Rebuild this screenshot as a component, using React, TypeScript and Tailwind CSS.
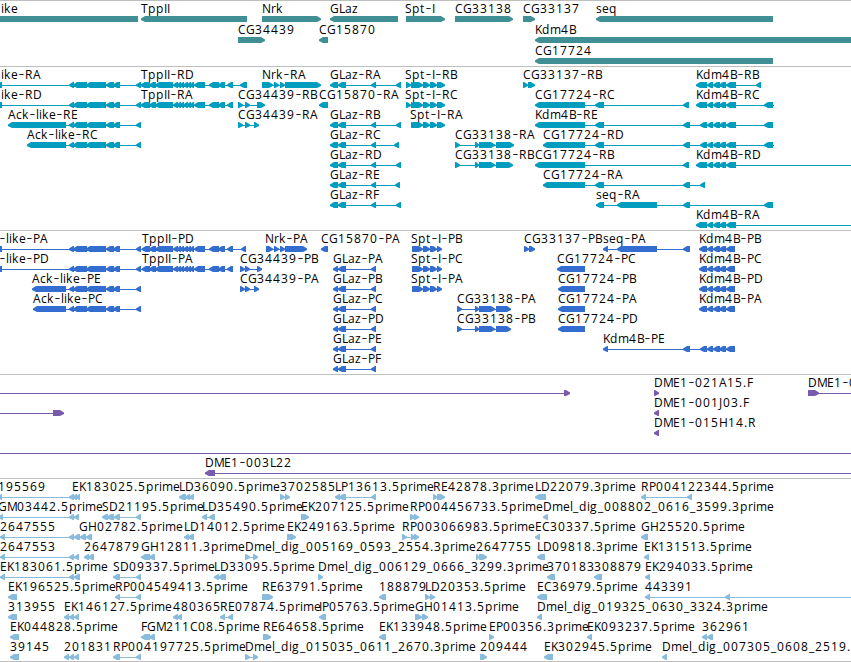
type Dir = "<" | ">";

// row, label, direction, exon blocks as "start:end", optional overrides
type Feature = [number, string, Dir, string, { x?: number; from?: number; to?: number }?];

type Track = {
  name: string;
  color: string;
  pitch?: number;
  className: string;
  features: Feature[];
};

const ACK = "69:74 73:87 86:106 106:114 113:120 136:141";
const TPP = "149:156 155:173 173:178 177:181 180:184 183:188 187:191 190:194 194:205 209:219 218:225 227:233";
const KDM = "707:713 713:720 719:726";

const genes: Feature[] = [
  [0, "ike", "<", "-30:138", { x: 1 }],
  [0, "TppII", "<", "141:247"],
  [0, "Nrk", ">", "262:321"],
  [0, "GLaz", "<", "330:398"],
  [0, "Spt-I", ">", "406:445", { x: 405 }],
  [0, "CG33138", ">", "455:513"],
  [0, "CG33137", ">", "523:535"],
  [0, "seq", "<", "596:773"],
  [1, "CG34439", ">", "238:265"],
  [1, "CG15870", "<", "319:328"],
  [1, "Kdm4B", "<", "535:870"],
  [2, "CG17724", "<", "535:773"],
];

const transcripts: Feature[] = [
  [0, "ike-RA", "<", `-20:2 ${ACK} 141:150 ${TPP} 240:247`, { x: 1 }],
  [0, "TppII-RD", "<", "141:150"],
  [0, "Nrk-RA", ">", "262:273 274:279 280:285 285:321"],
  [0, "GLaz-RA", "<", "330:338 338:346 371:376 396:401"],
  [0, "Spt-I-RB", ">", "406:411 411:416 413:423 423:430 430:437 437:445", { x: 405 }],
  [0, "CG33137-RB", ">", "523:528 528:535"],
  [0, "Kdm4B-RB", "<", `696:707 ${KDM} 726:736 756:761`],
  [1, "ike-RD", "<", `-20:2 ${ACK} 141:150 ${TPP}`, { x: 1 }],
  [1, "TppII-RA", "<", "141:150"],
  [1, "CG34439-RB", ">", "238:243 245:250 257:265"],
  [1, "CG15870-RA", "<", "319:328"],
  [1, "Spt-I-RC", ">", "406:411 411:416 413:423 423:430 430:437 437:445", { x: 405 }],
  [1, "CG17724-RC", "<", "535:585 595:604 683:689"],
  [1, "Kdm4B-RC", "<", `696:707 ${KDM} 726:736 764:773`, { to: 774 }],
  [2, "Ack-like-RE", "<", `8:66 ${ACK}`],
  [2, "CG34439-RA", ">", "238:243 245:250 254:259"],
  [2, "GLaz-RB", "<", "330:338 338:346 371:376 396:401"],
  [2, "Spt-I-RA", ">", "411:416 413:423 423:430 430:437 437:445", { x: 410 }],
  [2, "Kdm4B-RE", "<", `535:585 595:604 683:690 700:707 ${KDM} 726:736 764:773`],
  [3, "Ack-like-RC", "<", `27:66 ${ACK}`],
  [3, "GLaz-RC", "<", "330:338 338:346 371:376 394:399"],
  [3, "CG33138-RA", ">", "455:460 475:479 479:495 496:514"],
  [3, "CG17724-RD", "<", `543:585 595:604 683:690 700:707 ${KDM} 726:736 764:773`, { to: 774 }],
  [4, "GLaz-RD", "<", "330:338 338:346 371:376 396:401"],
  [4, "CG33138-RB", ">", "455:460 475:479 479:495 496:513"],
  [4, "CG17724-RB", "<", "535:585 683:689"],
  [4, "Kdm4B-RD", "<", `696:707 ${KDM} 726:736`, { to: 851 }],
  [5, "GLaz-RE", "<", "330:338 338:346 371:376 395:400"],
  [5, "CG17724-RA", "<", "543:585 595:604 683:690 700:705"],
  [6, "GLaz-RF", "<", "330:338 338:346 371:376 396:401"],
  [6, "seq-RA", "<", "596:604 617:657 683:690 764:773"],
  [7, "Kdm4B-RA", "<", `696:707 ${KDM} 726:736`, { to: 851 }],
];

const GLAZ_P = "333:338 338:346 371:376";
const SPT_P = "412:416 413:423 423:430 430:437 437:442";

const proteins: Feature[] = [
  [0, "-like-PA", "<", `-20:2 ${ACK} 142:150 ${TPP} 241:246`, { x: -1 }],
  [0, "TppII-PD", "<", "142:150"],
  [0, "Nrk-PA", ">", "266:273 274:279 280:285 285:307", { x: 265 }],
  [0, "CG15870-PA", "<", "321:328"],
  [0, "Spt-I-PB", ">", SPT_P, { x: 411 }],
  [0, "CG33137-PB", ">", "524:529 529:535"],
  [0, "seq-PA", "<", "603:608 617:657 683:690"],
  [0, "Kdm4B-PB", "<", `699:707 ${KDM} 726:735`],
  [1, "-like-PD", "<", `-20:2 ${ACK} 142:150 ${TPP}`, { x: -1 }],
  [1, "TppII-PA", "<", "142:150"],
  [1, "CG34439-PB", ">", "240:245 245:250 257:262"],
  [1, "GLaz-PA", "<", GLAZ_P],
  [1, "Spt-I-PC", ">", SPT_P, { x: 411 }],
  [1, "CG17724-PC", "<", "557:585"],
  [1, "Kdm4B-PC", "<", `699:707 ${KDM} 726:735`],
  [2, "Ack-like-PE", "<", `32:66 ${ACK}`],
  [2, "CG34439-PA", ">", "240:245 245:250 254:259"],
  [2, "GLaz-PB", "<", GLAZ_P],
  [2, "Spt-I-PA", ">", SPT_P, { x: 411 }],
  [2, "CG17724-PB", "<", "558:585"],
  [2, "Kdm4B-PD", "<", `699:707 ${KDM} 726:735`],
  [3, "Ack-like-PC", "<", `33:66 ${ACK}`],
  [3, "GLaz-PC", "<", GLAZ_P],
  [3, "CG33138-PA", ">", "457:462 475:479 479:495 496:511"],
  [3, "CG17724-PA", "<", "558:585"],
  [3, "Kdm4B-PA", "<", `699:707 ${KDM} 726:735`],
  [4, "GLaz-PD", "<", GLAZ_P],
  [4, "CG33138-PB", ">", "457:462 475:479 479:495 496:511"],
  [4, "CG17724-PD", "<", "558:585"],
  [5, "GLaz-PE", "<", GLAZ_P],
  [5, "Kdm4B-PE", "<", `603:608 683:690 700:707 ${KDM} 726:735`],
  [6, "GLaz-PF", "<", GLAZ_P],
];

const clones: Feature[] = [
  [0, "", ">", "564:570", { from: 0 }],
  [0, "DME1-021A15.F", ">", "654:659"],
  [0, "DME1-0", ">", "808:819", { to: 851 }],
  [1, "", ">", "53:64", { from: 0 }],
  [1, "DME1-001J03.F", "<", "654:659"],
  [2, "DME1-015H14.R", "<", "654:659"],
  [3, "", ">", "", { from: 0, to: 851 }],
  [4, "DME1-003L22", "<", "205:215", { to: 851 }],
];

const ests: Feature[] = [
  [0, "195569", "<", "-1:2 69:74 73:77 76:80", { x: -2 }],
  [0, "EK183025.5prime", "<", "", { x: 72 }],
  [0, "LD36090.5prime", "<", "179:186 185:190 189:194"],
  [0, "3702585", ">", "280:285 285:290"],
  [0, "LP13613.5prime", "<", "335:340 339:346 371:376"],
  [0, "RE42878.3prime", ">", "433:437 437:445"],
  [0, "LD22079.3prime", "<", "535:546"],
  [0, "RP004122344.5prime", "<", "641:646 687:692"],
  [1, "GM03442.5prime", "<", "-1:3 69:74 74:79", { x: -2 }],
  [1, "SD21195.5prime", "<", "102:108 107:114 114:120 136:141"],
  [1, "LD35490.5prime", "<", "202:207 209:215"],
  [1, "EK207125.5prime", ">", "301:309"],
  [1, "RP004456733.5prime", ">", "410:415 414:419"],
  [1, "Dmel_dig_008802_0616_3599.3prime", "<", "543:548"],
  [2, "2647555", "<", "0:5 69:74 74:80 80:86 86:92"],
  [2, "GH02782.5prime", "<", "", { x: 79 }],
  [2, "LD14012.5prime", "<", "184:189 188:194"],
  [2, "EK249163.5prime", ">", "287:296"],
  [2, "RP003066983.5prime", ">", "402:407 411:415 414:419"],
  [2, "EC30337.5prime", "<", "535:540"],
  [2, "GH25520.5prime", "<", "641:648"],
  [3, "2647553", "<", "0:5 69:74 74:79"],
  [3, "2647879", "<", "84:89 88:94"],
  [3, "GH12811.3prime", "<", "141:150 149:155"],
  [3, "Dmel_dig_005169_0593_2554.3prime", ">", "245:250 253:258"],
  [3, "2647755", ">", "476:479 479:487"],
  [3, "LD09818.3prime", "<", "537:545"],
  [3, "EK131513.5prime", "<", "644:649"],
  [4, "EK183061.5prime", "<", "0:5 69:74 74:80"],
  [4, "SD09337.5prime", "<", "113:120 136:141"],
  [4, "LD33095.5prime", "<", "214:219 218:226"],
  [4, "Dmel_dig_006129_0666_3299.3prime", ">", "318:323"],
  [4, "370183", "<", "547:555"],
  [4, "308879", "<", "594:602"],
  [4, "EK294033.5prime", "<", "645:650"],
  [5, "EK196525.5prime", "<", "8:17"],
  [5, "RP004549413.5prime", "<", "115:120 136:141"],
  [5, "RE63791.5prime", ">", "262:273"],
  [5, "188879", "<", "379:386"],
  [5, "LD20353.5prime", ">", "425:430 430:435"],
  [5, "EC36979.5prime", "<", "537:547"],
  [5, "443391", "<", "645:650 725:730", { to: 851 }],
  [6, "313955", "<", "8:17"],
  [6, "EK146127.5prime", "<", "64:69 69:74 74:79"],
  [6, "480365", "<", "173:178 177:182"],
  [6, "RE07874.5prime", "<", "220:225 228:233"],
  [6, "IP05763.5prime", "<", "319:326"],
  [6, "GH01413.5prime", ">", "415:422 422:428"],
  [6, "Dmel_dig_019325_0630_3324.3prime", "<", "537:542"],
  [7, "EK044828.5prime", "<", "10:19"],
  [7, "FGM211C08.5prime", "<", "141:150 149:155"],
  [7, "RE64658.5prime", ">", "263:271"],
  [7, "EK133948.5prime", "<", "379:386"],
  [7, "EP00356.3prime", ">", "489:494"],
  [7, "EK093237.5prime", "<", "587:592"],
  [7, "362961", "<", "702:707 707:713"],
  [8, "39145", "<", "10:19"],
  [8, "201831", "<", "64:69 69:74 74:79"],
  [8, "RP004197725.5prime", "<", "113:120 136:141"],
  [8, "Dmel_dig_015035_0611_2670.3prime", ">", "245:250 253:258"],
  [8, "209444", ">", "480:487"],
  [8, "EK302945.5prime", "<", "544:553"],
  [8, "Dmel_dig_007305_0608_2519.", "<", "662:667"],
];

const tracks: Track[] = [
  { name: "genes", color: "#408f94", pitch: 21, className: "h-[66px]", features: genes },
  { name: "transcripts", color: "#009dbf", className: "h-[164px]", features: transcripts },
  { name: "proteins", color: "#326dcf", className: "h-[144px]", features: proteins },
  { name: "clones", color: "#7a5aab", className: "h-[104px]", features: clones },
  { name: "ests", color: "#89bbdd", className: "h-[184px] border-b", features: ests },
];

// whole-pixel advances, anything missing is 8
const ADVANCE: Record<string, number> = {
  G: 9, L: 6, M: 10, D: 9, E: 7, F: 6, B: 7, P: 7, T: 7, S: 7, N: 9, I: 3, J: 4, K: 7, H: 9,
  a: 7, z: 6, c: 6, k: 7, l: 3, i: 3, e: 7, s: 6, t: 5, r: 5, m: 11,
  "-": 7, ".": 4, _: 6,
};

function glyphPositions(text: string, start: number) {
  let x = start;
  return [...text].map((ch) => {
    const at = x;
    x += ADVANCE[ch] ?? 8;
    return ch === "-" ? at + 0.5 : at;
  });
}

function block(a: number, b: number, y: number, dir: Dir) {
  const head = Math.min(5, b - a);
  return dir === "<"
    ? `M${a} ${y + 2.5}L${a + head - 1} ${y}H${b}V${y + 6}H${a + head - 1}L${a} ${y + 4}Z`
    : `M${b} ${y + 2.5}L${b - head + 1} ${y}H${a}V${y + 6}H${b - head + 1}L${b} ${y + 4}Z`;
}

function Label({ text, x, y }: { text: string; x: number; y: number }) {
  const xs = glyphPositions(text, x);
  return (
    <text x={xs.join(" ")} y={y} fill="#000">
      {/* hyphens are set larger so they fill their seven pixel advance */}
      {text.split(/(-)/).map((part, i) =>
        part === "-" ? (
          <tspan key={i} className="text-[18px] font-light" dy="1">
            -
          </tspan>
        ) : part ? (
          <tspan key={i} dy={i > 0 ? -1 : 0}>
            {part}
          </tspan>
        ) : null
      )}
    </text>
  );
}

function FeatureGlyph({ feature, pitch }: { feature: Feature; pitch: number }) {
  const [row, label, dir, segs, opts = {}] = feature;
  const blocks = segs ? segs.split(" ").map((s) => s.split(":").map(Number)) : [];
  const y = 15 + row * pitch;
  const from = opts.from ?? blocks[0]?.[0] ?? 0;
  const to = opts.to ?? blocks[blocks.length - 1]?.[1] ?? from;

  return (
    <g>
      {(blocks.length > 1 || opts.to !== undefined || opts.from !== undefined) && (
        <rect x={from} y={y + 3} width={to - from} height="1" shapeRendering="crispEdges" />
      )}
      <path d={blocks.map(([a, b]) => block(a, b, y, dir)).join("")} />
      {label && <Label text={label} x={opts.x ?? from} y={y - 3} />}
    </g>
  );
}

export default function App() {
  return (
    <main className="flex h-[662px] w-[851px] flex-col overflow-hidden bg-white">
      {tracks.map(({ name, color, pitch = 20, className, features }) => (
        <section key={name} className={`shrink-0 overflow-hidden border-t border-[#bebebe] ${className}`}>
          <svg
            className="block h-full w-full font-['Open_Sans','DejaVu_Sans',sans-serif] text-[12px]"
            fill={color}
          >
            {features.map((f, i) => (
              <FeatureGlyph key={i} feature={f} pitch={pitch} />
            ))}
          </svg>
        </section>
      ))}
    </main>
  );
}
